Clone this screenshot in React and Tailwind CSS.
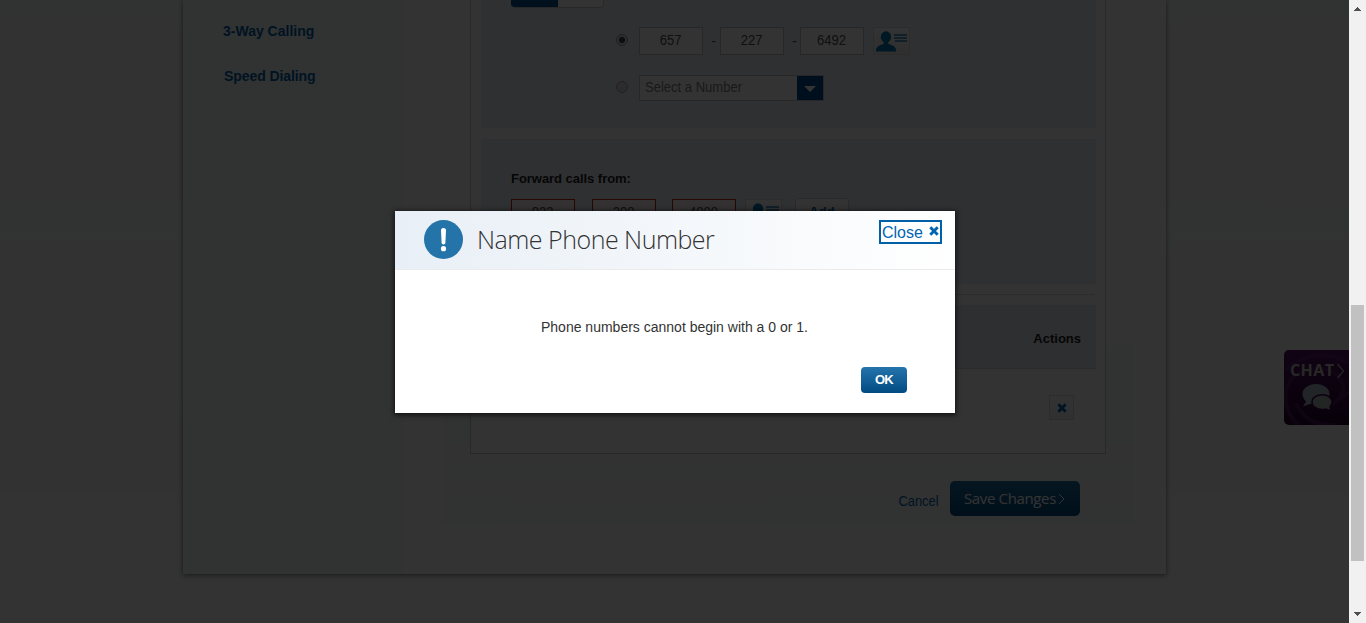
import React from 'react';

const sans = "font-['Liberation_Sans',Arial,sans-serif]";
const humanist = "font-['Open_Sans','Noto_Sans',sans-serif]";

function ContactIcon() {
  return (
    <svg width="33" height="22" viewBox="0 0 33 22" className="block shrink-0">
      <ellipse cx="11" cy="6" rx="5.200" ry="5.800" fill="#0074b3" />
      <path d="M8.800 10h4.400v2.700l4.800 2c2.200 1.100 3.200 2.800 3.200 5.800H.9c0-3 .9-4.700 3.100-5.800l4.800-2z" fill="#0074b3" />
      <path d="M19 4h13M19 7h13M20 10h12" stroke="#1c7fbb" strokeWidth="1.600" />
    </svg>
  );
}

function ContactButton() {
  return (
    <button className="flex h-7 w-[37px] items-start justify-start border border-[#dcdcdc] bg-linear-to-b from-white to-[#eaeaea] pl-px pt-[3px]">
      <ContactIcon />
    </button>
  );
}

function NumberBox({ children, error }) {
  return (
    <div className={`flex h-7 w-16 items-center justify-center border pb-0.5 text-sm leading-none text-[#505050] ${error ? 'border-[#d02010] bg-[#fff5f2]' : 'border-[#c4c4c4] bg-white'}`}>
      <span className="inline-block origin-center scale-x-[0.93]">{children}</span>
    </div>
  );
}

function Dash({ children, className = '' }) {
  return <span className={`w-[17px] pl-1 text-center text-sm leading-7 text-[#555] ${className}`}>{children}</span>;
}

function Radio({ checked }) {
  return (
    <span className="flex size-3 items-center justify-center rounded-full border border-[#a0a0a0] bg-[#dcdcdc]">
      {checked && <span className="size-1.5 rounded-full bg-[#444]" />}
    </span>
  );
}

function Cross({ className }) {
  return (
    <svg viewBox="0 0 10 10" className={className}>
      <path d="M1.300 1.300l7.400 7.400M8.700 1.300l-7.400 7.400" stroke="currentColor" strokeWidth="2.900" />
    </svg>
  );
}

function Sidebar() {
  return (
    <nav className="w-[220px] shrink-0 bg-[#f5fdf9] pl-10 pt-[22px] text-sm font-bold text-[#0062ad]">
      <a className="block h-[45px] leading-[18px]">3-Way Calling</a>
      <a className="block pl-px leading-[18px] tracking-[-0.08px]">Speed Dialing</a>
    </nav>
  );
}

function ForwardTo() {
  return (
    <section className="h-32 bg-[#ebf0f8] pl-[30px]">
      <div className="flex h-2 w-[93px] overflow-hidden rounded-b border-b border-r border-[#c9c9c9] bg-white">
        <span className="w-[47px] bg-[#005090]" />
      </div>
      <div className="mt-[19px] flex pl-[105px]">
        <span className="flex w-[23px] items-center pb-0.5"><Radio checked /></span>
        <NumberBox>657</NumberBox><Dash>-</Dash>
        <NumberBox>227</NumberBox><Dash className="-mr-px">-</Dash>
        <NumberBox>6492</NumberBox>
        <div className="ml-[9px]"><ContactButton /></div>
      </div>
      <div className="mt-5 flex pl-[105px]">
        <span className="flex w-[23px] items-center pb-0.5"><Radio /></span>
        <div className="flex h-[26px] w-[185px] justify-between border border-[#c4c4c4] bg-white pl-[5px] text-sm leading-[23px] text-[#808080]">
          <span className="inline-block origin-left scale-x-[0.93]">Select a Number</span>
          <span className="flex w-[26px] items-center justify-center bg-[#004b91]">
            <span className="mt-0.5 border-x-[6px] border-t-[6px] border-x-transparent border-t-white" />
          </span>
        </div>
      </div>
    </section>
  );
}

function ForwardFrom() {
  return (
    <section className="mt-[11px] h-[145px] bg-[#ebf0f8] pl-[30px] pt-8">
      <h2 className="text-[13px] font-bold leading-4 tracking-[-0.04px] text-[#222]">Forward calls from:</h2>
      <div className="mt-3 flex">
        <NumberBox error>022</NumberBox><Dash className="invisible">-</Dash>
        <NumberBox error>200</NumberBox><Dash className="invisible -mr-px">-</Dash>
        <NumberBox error>4000</NumberBox>
        <div className="ml-[9px]"><ContactButton /></div>
        <button className="-mt-px ml-[13px] h-7 w-[54px] rounded-[3px] border border-[#d0d0d0] bg-white pb-0.5 text-[13px] font-bold leading-none text-[#0066b3]">Add</button>
      </div>
    </section>
  );
}

function EntryList() {
  return (
    <>
      <div className="mr-0.5 mt-2.5 border-t border-dotted border-[#b8b8b8]" />
      <div className="mt-2.5 flex h-16 items-center justify-end border-b border-[#cbd6e2] bg-[#e6ebf2] pr-[15px] pt-1 text-[13px] font-bold text-[#222]">Actions</div>
      <div className="flex justify-end pr-[22px] pt-[26px]">
        <button className="flex size-[25px] items-center justify-center border border-[#dcdcdc] bg-linear-to-b from-white to-[#eee] text-[#0066b3]">
          <Cross className="size-2.5" />
        </button>
      </div>
    </>
  );
}

function Page() {
  return (
    <main className="ml-[183px] flex h-[574px] w-[983px] bg-white shadow-[0_1px_5px_rgba(0,0,0,0.55)]">
      <Sidebar />
      <div className="ml-10 h-[524px] w-[691px] bg-[linear-gradient(to_bottom,white_0px,white_345px,#f5fdf9_345px,#f5fdf9_444px,#f8f8f8_444px,#f5f8f6_490px,#f3faf7_524px)] px-[27px]">
        <div className="h-[454px] w-[636px] border border-t-0 border-[#c8c8c8] bg-white pl-2.5 pr-[9px]">
          <ForwardTo />
          <ForwardFrom />
          <EntryList />
        </div>
        <div className="mt-[27px] flex justify-end pr-[27px]">
          <a className="mr-[11px] pt-[11px] text-sm leading-[18px] text-[#0066b3]"><span className="inline-block origin-right scale-x-[0.92]">Cancel</span></a>
          <button className={`${humanist} flex h-[35px] w-[130px] items-center rounded-[5px] bg-linear-to-b from-[#1f6fa5] to-[#004b82] pl-3.5 text-[15px] font-medium tracking-[-0.36px] text-white`}>
            <span className="w-[94px] whitespace-nowrap text-left">Save Changes</span>
            <svg width="7" height="12" viewBox="0 0 7 12" fill="none" stroke="white"><path d="M1 1l5 5-5 5" /></svg>
          </button>
        </div>
      </div>
    </main>
  );
}

function ChatTab() {
  return (
    <div className="absolute left-[1284px] top-[350px] h-[75px] w-[65px] overflow-hidden rounded-l-[5px] bg-linear-to-b from-[#551064] to-[#28052f]">
      <svg width="65" height="75" viewBox="0 0 65 75" fill="none">
        <path d="M2 20C17 3 43 1 65 13M14 75C-4 56 -1 35 12 25M12 25C35 12 58 21 59 37c0 9-5 15-13 18M12 53c8 19 23 22 39 22M65 42c-8 5-14 12-23 14" stroke="#682477" strokeWidth="4" opacity=".5" />
        <path d="M53.500 14l6 7-6 7" stroke="#b8b8c0" strokeWidth="1.200" />
        <path d="M32 34c7.500 0 13.500 4.400 13.500 10S39.500 54.500 32 54.500c-2 0-4-.3-5.500-.8L19 56.500l3.200-5C20 49.800 18.500 47 18.500 44c0-5.600 6-10 13.500-10z" fill="#aab8c5" />
        <path d="M38.500 44.800c-6.300 0-10.500 3.200-10.500 7.400s4.200 7.300 10.500 7.300c1 0 2-.1 3-.4l6 1.700-1.500-4.300c1.300-1.100 2-2.600 2-4.300 0-4.200-4-7.400-9.500-7.400z" fill="#aab8b5" stroke="#3b0848" strokeWidth="1.500" />
      </svg>
      <span className={`${humanist} absolute left-1.5 top-[9px] text-base font-bold leading-[22px] tracking-[0.4px] text-[#c1c7bd]`}>CHAT</span>
    </div>
  );
}

function Dialog() {
  return (
    <div role="dialog" className="absolute left-[395px] top-[211px] h-[202px] w-[560px] bg-white shadow-[0_1px_5px_1px_rgba(0,0,0,0.65)]">
      <header className="flex h-[59px] items-start border-b border-[#ebebeb] bg-linear-to-r from-[#e8eff6] to-white pl-[29px] pr-[13px] pt-[9px]">
        <svg width="39" height="39" viewBox="0 0 39 39" className="block shrink-0">
          <circle cx="19.500" cy="19.500" r="19.500" fill="#2474aa" />
          <path d="M19.500 8c1.700 0 2.600 1 2.500 2.600l-.6 12.200c-.1 1-.8 1.700-1.900 1.700s-1.800-.7-1.900-1.700L17 10.600C16.900 9 17.800 8 19.500 8z" fill="white" />
          <circle cx="19.500" cy="28.700" r="2.600" fill="white" />
        </svg>
        <h1 className={`${humanist} ml-3.5 whitespace-nowrap text-[25px] font-light leading-[39px] tracking-[-0.5px] text-[#333]`}>Name Phone Number</h1>
        <button className="ml-auto flex h-6 w-[63px] items-center border-2 border-[#0060a9] bg-white pl-px text-base leading-5 text-[#0066b3]">
          <span className="pt-0.5">Close</span>
          <Cross className="mb-0.5 ml-[6px] size-2.5 shrink-0" />
        </button>
      </header>
      <p className="pl-[146px] pt-[47px] text-sm leading-5 text-[#333]">Phone numbers cannot begin with a 0 or 1.</p>
      <div className="mt-[30px] flex justify-end pr-12">
        <button className="h-[26px] w-[46px] rounded bg-linear-to-b from-[#2474ac] to-[#004b82] pb-0.5 text-[13px] font-bold leading-none tracking-[-0.8px] text-white">OK</button>
      </div>
    </div>
  );
}

function Scrollbar() {
  return (
    <div className="flex h-full w-[17px] flex-col items-center bg-[#f1f1f1]">
      <svg width="17" height="17" viewBox="0 0 17 17" shapeRendering="crispEdges"><path d="M5 11h7V10h-1V9h-1V8H9V7H8v1H7v1H6v1H5z" fill="#505050" /></svg>
      <div className="mt-72 h-64 w-[13px] bg-[#c1c1c1]" />
      <svg className="mt-auto" width="17" height="17" viewBox="0 0 17 17" shapeRendering="crispEdges"><path d="M5 6h7v1h-1v1h-1v1H9v1H8V9H7V8H6V7H5z" fill="#505050" /></svg>
    </div>
  );
}

export default function App() {
  return (
    <div className={`${sans} flex h-[623px] w-[1366px] overflow-hidden`}>
      <div className="relative h-full w-[1349px] overflow-hidden bg-[linear-gradient(to_bottom,#f5fdf9_0px,#f8f8f8_35px,#f8f8f8_200px,#f5fdf9_212px,#f8faf9_260px,#f8f8f8_480px,#fdfdfd_500px)]">
        <Page />
        <ChatTab />
        <div className="absolute inset-0 bg-black/80" />
        <Dialog />
      </div>
      <Scrollbar />
    </div>
  );
}
